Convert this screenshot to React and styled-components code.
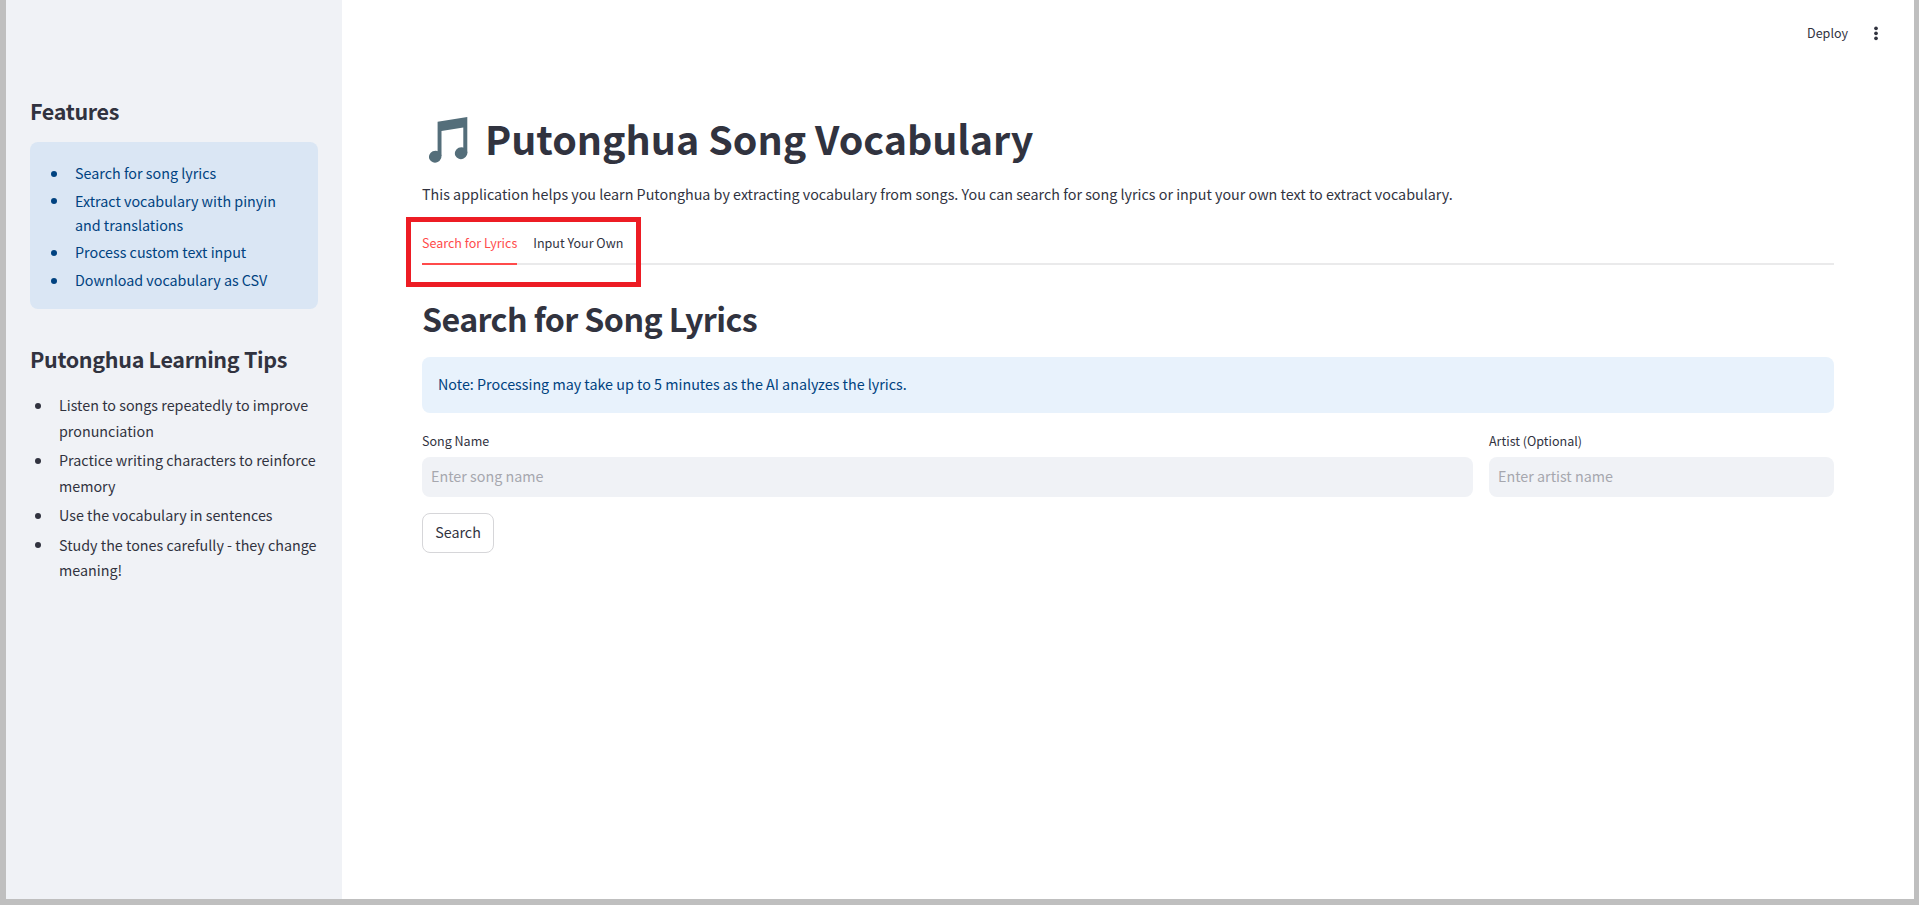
import React from "react";
import styled, { createGlobalStyle } from "styled-components";

const GlobalStyle = createGlobalStyle`
  * { box-sizing: border-box; }
  html, body { margin: 0; padding: 0; }
  body, input, button {
    font-family: "Noto Sans CJK SC", "Open Sans", sans-serif;
    color: #31333f;
  }
  h1, h2, h3, p, ul { margin: 0; padding: 0; }
`;

const Frame = styled.div`
  display: flex;
  width: 1919px;
  height: 905px;
  padding: 0 5px 6px 6px;
  background: #bfbfbf;
  overflow: hidden;
`;

const Sidebar = styled.aside`
  flex: 0 0 336px;
  padding: 96px 24px 0;
  background: #f0f2f6;
`;

const SidebarHeading = styled.h3`
  font-size: 21.5px;
  font-weight: 600;
  line-height: 29px;
  letter-spacing: -0.32px;
  white-space: nowrap;
`;

const FeatureBox = styled.div`
  height: 167px;
  margin: 17px 0 35px;
  padding: 18.9px 16px;
  border-radius: 8px;
  background: #dae6f4;
  color: #004280;
`;

const List = styled.ul`
  display: flex;
  flex-direction: column;
  gap: ${(p) => p.$gap};
  margin-top: ${(p) => p.$top || "0"};
  list-style: none;
  font-size: 14.32px;
  line-height: ${(p) => p.$line};
`;

const Item = styled.li`
  display: flex;
  white-space: nowrap;
  &::before {
    content: "";
    flex: 0 0 6px;
    height: 6px;
    margin: calc((${(p) => p.$line} - 6px) / 2 + 0.7px) 18px 0 5px;
    border-radius: 50%;
    background: currentColor;
  }
`;

const Main = styled.main`
  flex: 1;
  display: flex;
  flex-direction: column;
  background: #fff;
`;

const Toolbar = styled.header`
  display: flex;
  justify-content: flex-end;
  align-items: center;
  gap: 26px;
  height: 66px;
  padding-right: 36px;
  font-size: 12.53px;
`;

const DeployLabel = styled.span`
  margin-bottom: 2px;
`;

const Content = styled.div`
  padding: 45px 80px 0;
`;

const Title = styled.h1`
  display: flex;
  align-items: center;
  gap: 17px;
  height: 53px;
  padding-left: 7px;
  font-size: 39.4px;
  font-weight: 700;
  line-height: 53px;
  white-space: nowrap;
  svg { margin-top: 6px; }
`;

const Intro = styled.p`
  margin-top: 16.5px;
  font-size: 14.32px;
  line-height: 26px;
  white-space: nowrap;
`;

const TabsRow = styled.div`
  position: relative;
  display: flex;
  gap: 16px;
  height: 40px;
  margin-top: 18.5px;
  border-bottom: 2px solid #eaeaeb;
`;

const Tab = styled.div`
  height: 40px;
  padding-top: 6px;
  font-size: 12.53px;
  line-height: 23px;
  color: ${(p) => (p.$active ? "#ff4b4b" : "inherit")};
  border-bottom: 2px solid ${(p) => (p.$active ? "#ff4b4b" : "transparent")};
  white-space: nowrap;
`;

const Highlight = styled.div`
  position: absolute;
  left: -16px;
  top: -8px;
  width: 235px;
  height: 70px;
  border: 5px solid #ed1c24;
`;

const SectionTitle = styled.h2`
  margin-top: 31.5px;
  font-size: 32.2px;
  font-weight: 600;
  line-height: 43px;
  letter-spacing: -0.6px;
  white-space: nowrap;
`;

const Note = styled.div`
  height: 56px;
  margin-top: 17.5px;
  padding: 14.5px 16px;
  border-radius: 8px;
  background: #e8f2fc;
  color: #004280;
  font-size: 14.32px;
  line-height: 24px;
`;

const Fields = styled.div`
  display: grid;
  grid-template-columns: 1051px 345px;
  gap: 16px;
  margin-top: 17px;
`;

const Field = styled.label`
  display: flex;
  flex-direction: column;
  gap: 6px;
  font-size: 12.53px;
  line-height: 21px;
`;

const Input = styled.input`
  width: 100%;
  height: 40px;
  padding: 0 9px 3px;
  border: 0;
  border-radius: 8px;
  background: #f0f2f6;
  font-size: 14.32px;
  &::placeholder { color: #a6a7ae; opacity: 1; }
`;

const SearchButton = styled.button`
  display: block;
  width: 72px;
  height: 40px;
  margin-top: 16px;
  padding: 0 0 3px;
  border: 1px solid #d6d6d9;
  border-radius: 8px;
  background: #fff;
  font-size: 14.32px;
  line-height: 21px;
`;

const MusicNote = () => (
  <svg width="39" height="47" viewBox="0 0 39 47" fill="#546e7a">
    <path d="M8.6 4.7 38.3 0v36h-4V10.6L12.5 14v25H8.6z" />
    <ellipse cx="6.2" cy="39.7" rx="6.3" ry="5.9" transform="rotate(-25 6.2 39.7)" />
    <ellipse cx="32.1" cy="36.2" rx="6.3" ry="5.9" transform="rotate(-25 32.1 36.2)" />
  </svg>
);

const MenuDots = () => (
  <svg width="4" height="15" viewBox="0 0 4 15" fill="#31333f">
    <circle cx="2" cy="2.3" r="1.85" />
    <circle cx="2" cy="7.3" r="1.85" />
    <circle cx="2" cy="12.3" r="1.85" />
  </svg>
);

const features = [
  "Search for song lyrics",
  <>Extract vocabulary with pinyin<br />and translations</>,
  "Process custom text input",
  "Download vocabulary as CSV",
];

const tips = [
  <>Listen to songs repeatedly to improve<br />pronunciation</>,
  <>Practice writing characters to reinforce<br />memory</>,
  "Use the vocabulary in sentences",
  <>Study the tones carefully - they change<br />meaning!</>,
];

export default function App() {
  return (
    <Frame>
      <GlobalStyle />
      <Sidebar>
        <SidebarHeading>Features</SidebarHeading>
        <FeatureBox>
          <List $line="24px" $gap="3.7px">
            {features.map((f, i) => (
              <Item key={i} $line="24px"><span>{f}</span></Item>
            ))}
          </List>
        </FeatureBox>
        <SidebarHeading>Putonghua Learning Tips</SidebarHeading>
        <List $line="25.6px" $gap="3.8px" $top="19.35px">
          {tips.map((t, i) => (
            <Item key={i} $line="25.6px"><span>{t}</span></Item>
          ))}
        </List>
      </Sidebar>
      <Main>
        <Toolbar>
          <DeployLabel>Deploy</DeployLabel>
          <MenuDots />
        </Toolbar>
        <Content>
          <Title><MusicNote /><span>Putonghua Song Vocabulary</span></Title>
          <Intro>
            This application helps you learn Putonghua by extracting vocabulary from songs. You can
            search for song lyrics or input your own text to extract vocabulary.
          </Intro>
          <TabsRow>
            <Tab $active>Search for Lyrics</Tab>
            <Tab>Input Your Own</Tab>
            <Highlight />
          </TabsRow>
          <SectionTitle>Search for Song Lyrics</SectionTitle>
          <Note>Note: Processing may take up to 5 minutes as the AI analyzes the lyrics.</Note>
          <Fields>
            <Field>Song Name<Input placeholder="Enter song name" /></Field>
            <Field>Artist (Optional)<Input placeholder="Enter artist name" /></Field>
          </Fields>
          <SearchButton>Search</SearchButton>
        </Content>
      </Main>
    </Frame>
  );
}
